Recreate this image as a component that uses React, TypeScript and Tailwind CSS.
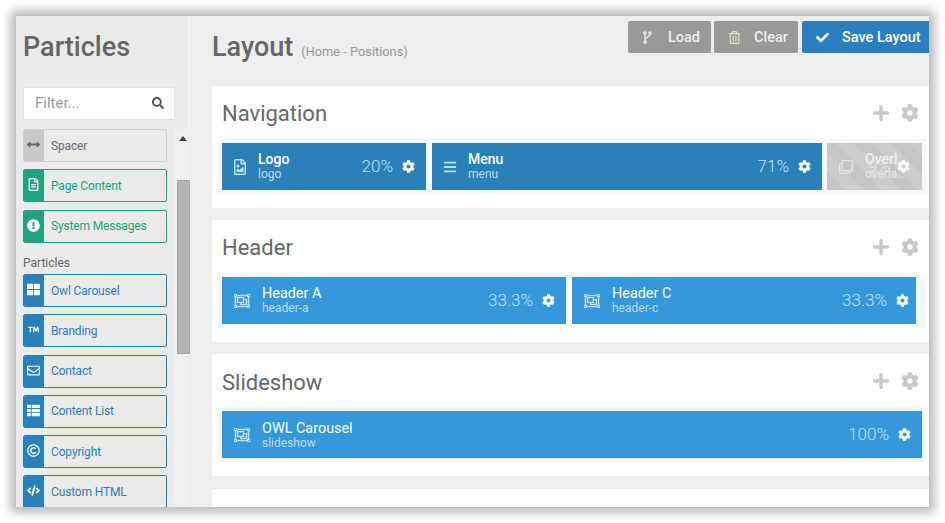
import type { ReactNode } from "react";
import {
  FaArrowsAltH,
  FaBars,
  FaCheck,
  FaCode,
  FaCog,
  FaExclamationCircle,
  FaPlus,
  FaRegClone,
  FaRegCopyright,
  FaRegEnvelope,
  FaRegFileAlt,
  FaRegFileImage,
  FaRegObjectGroup,
  FaRegTrashAlt,
  FaSearch,
  FaThLarge,
  FaThList,
  FaTrademark,
} from "react-icons/fa";

type Tone = "gray" | "green" | "blue";

const toneBox: Record<Tone, string> = {
  gray: "border-[#cfcfcf] text-[#6b6b6b]",
  green: "border-[#20a182] text-[#20a182]",
  blue: "border-[#2a80b9] text-[#2a80b9]",
};

const toneIcon: Record<Tone, string> = {
  gray: "bg-[#c9c9c9] text-[#666]",
  green: "bg-[#20a182] text-white",
  blue: "bg-[#2a80b9] text-white",
};

function ForkIcon() {
  return (
    <svg width="9" height="13" viewBox="0 0 9 13" fill="none" stroke="currentColor" strokeWidth="1.3" className="shrink-0">
      <circle cx="2" cy="2" r="1.2" />
      <circle cx="7" cy="2" r="1.2" />
      <circle cx="2" cy="11" r="1.2" />
      <path d="M2 3.2V9.8M7 3.2C7 6 2.4 6 2.2 8.4" />
    </svg>
  );
}

function Particle({ tone, icon, label }: { tone: Tone; icon: ReactNode; label: string }) {
  return (
    <div className={`flex h-[33px] w-[144px] shrink-0 items-center overflow-hidden rounded-[2px] border bg-[#ebebeb] text-[12px] tracking-[-0.15px] ${toneBox[tone]}`}>
      <span className={`-ml-px flex h-[33px] w-[21px] shrink-0 items-center justify-center pb-[2px] text-[13px] ${toneIcon[tone]}`}>{icon}</span>
      <span className="ml-[7px] whitespace-nowrap">{label}</span>
    </div>
  );
}

function Block({
  name,
  sub,
  pct,
  icon,
  dark,
  low,
  width,
  iconWidth,
  right = "pr-[11px]",
}: {
  name: string;
  sub: string;
  pct: string;
  icon: ReactNode;
  dark?: boolean;
  low?: boolean;
  width: string;
  iconWidth: string;
  right?: string;
}) {
  return (
    <div className={`flex h-[47px] shrink-0 items-center pl-3 ${right} ${dark ? "bg-[#2a80b9]" : "bg-[#3498da]"} ${width}`}>
      <span className={`flex justify-center text-[#c3dff2] ${iconWidth}`}>{icon}</span>
      <div className={`ml-3 leading-none ${low ? "pt-[2px]" : ""}`}>
        <div className={`leading-[15px] text-white ${dark ? "text-[14px] font-medium" : "text-[14.4px]"}`}>{name}</div>
        <div className="text-[12px] leading-[14px] text-[#bcdcf2]">{sub}</div>
      </div>
      <span className="ml-auto text-[17px] font-light text-[#c3e1f5]">{pct}</span>
      <FaCog className="ml-[9px] text-[13px] text-white" />
    </div>
  );
}

function Section({ title, low, children }: { title: string; low?: boolean; children?: ReactNode }) {
  return (
    <section className="h-[122px] w-[730px] shrink-0 rounded-[2px] bg-white px-[6px] pt-[12px]">
      <div className="flex h-[29px] w-[701px] items-center justify-between pl-1">
        <h2 className={`text-[22px] font-normal leading-none text-[#666] ${low ? "pt-[4px]" : "pt-[2px]"}`}>{title}</h2>
        <div className="flex items-center gap-[11px] text-[#c9c9c9]">
          <FaPlus className="text-[18px]" />
          <FaCog className="text-[18px]" />
        </div>
      </div>
      <div className="mt-[12px] flex h-[55px] w-[708px] gap-[6px] bg-[#f8f8f8] p-1">{children}</div>
    </section>
  );
}

const groupIcon = <FaRegObjectGroup className="text-[16px]" />;

export default function App() {
  return (
    <div className="h-[523px] w-[945px] overflow-hidden bg-white pl-4 pt-4 font-['Roboto',sans-serif]">
      <div className="flex h-[491px] w-[913px] overflow-hidden bg-[#eeeeee] shadow-[0_0_10px_5px_rgba(0,0,0,0.3)]">
        <aside className="flex w-[173px] shrink-0 flex-col border-r border-[#f5f5f5] bg-[#ebebeb]">
          <h1 className="mt-[13px] pl-[7px] text-[27px] font-medium leading-[36px] text-[#666]">Particles</h1>
          <div className="ml-[7px] mt-[22px] flex h-[33px] w-[152px] items-center justify-between border border-[#e2e2e2] bg-white px-[10px] text-[15px] text-[#999]">
            <span className="pl-px">Filter...</span>
            <FaSearch className="mb-[2px] text-[12px] text-[#555]" />
          </div>
          <div className="mt-[9px] flex min-h-0 flex-1">
            <div className="flex w-[159px] shrink-0 flex-col gap-[7.25px] overflow-hidden pl-[7px]">
              <Particle tone="gray" label="Spacer" icon={<FaArrowsAltH />} />
              <Particle tone="green" label="Page Content" icon={<FaRegFileAlt />} />
              <Particle tone="green" label="System Messages" icon={<FaExclamationCircle />} />
              <div className="h-[17px] text-[12px] leading-[27px] text-[#666]">Particles</div>
              <Particle tone="blue" label="Owl Carousel" icon={<FaThLarge />} />
              <Particle tone="blue" label="Branding" icon={<FaTrademark className="text-[11px]" />} />
              <Particle tone="blue" label="Contact" icon={<FaRegEnvelope />} />
              <Particle tone="blue" label="Content List" icon={<FaThList />} />
              <Particle tone="blue" label="Copyright" icon={<FaRegCopyright />} />
              <Particle tone="blue" label="Custom HTML" icon={<FaCode />} />
            </div>
            <div className="flex w-[14px] shrink-0 flex-col bg-[#f0f0f0] pl-[2px]">
              <div className="flex h-[51px] justify-start pl-[2px] pt-[7px]">
                <span className="h-0 w-0 border-x-[4px] border-b-[5px] border-x-transparent border-b-[#444]" />
              </div>
              <div className="h-[174px] w-[13px] border border-[#a5a5a5] bg-[#b4b4b4]" />
            </div>
          </div>
        </aside>

        <main className="min-w-0 flex-1 pl-[23px]">
          <div className="flex h-[70px] items-start">
            <div className="mt-[15px] flex items-baseline">
              <span className="text-[27px] font-medium leading-[32px] text-[#666]">Layout</span>
              <span className="ml-[8px] text-[12.8px] text-[#999]">(Home - Positions)</span>
            </div>
            <div className="ml-auto mt-[5px] flex gap-[3px] text-[14.5px] font-medium">
              <button className="flex h-[32px] w-[83px] items-center rounded-[2px] bg-[#999] pl-[15px] text-[#eee]">
                <ForkIcon />
                <span className="ml-[16px] pt-[2px]">Load</span>
              </button>
              <button className="flex h-[32px] w-[84px] items-center rounded-[2px] bg-[#999] pl-[14px] text-[#eee]">
                <FaRegTrashAlt className="text-[13px] text-[#e6dcc8]" />
                <span className="ml-[13px] pt-[2px]">Clear</span>
              </button>
              <button className="ml-[1px] flex h-[32px] w-[127px] items-center rounded-l-[2px] bg-[#2a7fc0] pl-[14px] text-white">
                <FaCheck className="text-[13px]" />
                <span className="ml-[13px] whitespace-nowrap pt-[2px]">Save Layout</span>
              </button>
            </div>
          </div>

          <div className="flex flex-col gap-[12px]">
            <Section title="Navigation">
              <Block
                dark
                name="Logo"
                sub="logo"
                pct="20%"
                width="w-[204px]"
                iconWidth="w-[12px]"
                icon={<FaRegFileImage className="shrink-0 text-[16px]" />}
              />
              <Block
                dark
                name="Menu"
                sub="menu"
                pct="71%"
                width="w-[390px]"
                iconWidth="w-[12px]"
                icon={<FaBars className="shrink-0 text-[14px]" />}
              />
              <div className="-ml-px flex h-[47px] w-[95px] shrink-0 items-center bg-[repeating-linear-gradient(45deg,#c6c6c6_0px,#c6c6c6_13px,#cdcdcd_13px,#cdcdcd_26px)] pl-3 pr-3">
                <FaRegClone className="shrink-0 text-[14px] text-[#e4e4e4]" />
                <div className="ml-[12px] w-[32px] shrink-0 whitespace-nowrap">
                  <div className="text-[14px] font-medium leading-[15px] text-[#f1f1f1]">Overl</div>
                  <div className="text-[12px] leading-[14px] text-[#e6e6e6]">overla..</div>
                </div>
                <span className="-ml-[29px] text-[17px] font-light text-[#e8e8e8]">9%</span>
                <FaCog className="ml-auto text-[13px] text-white" />
              </div>
            </Section>
            <Section title="Header">
              <Block name="Header A" sub="header-a" pct="33.3%" width="w-[344px]" iconWidth="w-[16px]" icon={groupIcon} />
              <Block name="Header C" sub="header-c" pct="33.3%" width="w-[344px]" iconWidth="w-[16px]" right="pr-[7px]" icon={groupIcon} />
            </Section>
            <Section title="Slideshow" low>
              <Block low name="OWL Carousel" sub="slideshow" pct="100%" width="w-[700px]" iconWidth="w-[16px]" icon={groupIcon} />
            </Section>
            <div className="mt-px h-[40px] w-[730px] shrink-0 bg-white" />
          </div>
        </main>
      </div>
    </div>
  );
}
